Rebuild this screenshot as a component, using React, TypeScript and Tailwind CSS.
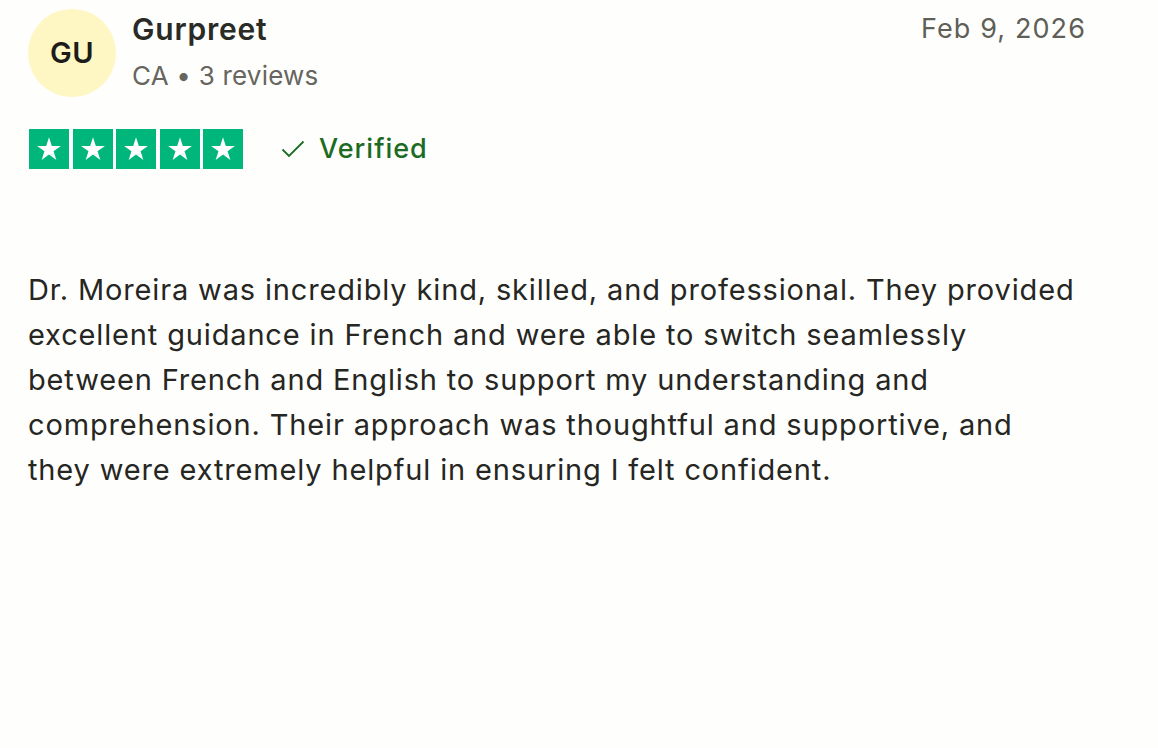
import React from "react";

function Star() {
  return (
    <div className="w-[40px] h-[40px] bg-[#00b67a] flex items-center justify-center">
      <svg width="30" height="30" viewBox="0 0 24 24">
        <path
          d="M12 2.6l2.25 6.93h7.28l-5.89 4.28 2.25 6.93L12 16.46l-5.89 4.28 2.25-6.93-5.89-4.28h7.28z"
          fill="#ffffff"
        />
        <path d="M15.2 15.4l0.7 2.2L12 16.46z" fill="#e6f5ee" />
      </svg>
    </div>
  );
}

export default function App() {
  const font = { fontFamily: "Inter, 'Noto Sans', sans-serif" };
  return (
    <div className="w-[1158px] h-[748px] bg-[#fefefd] text-[#2a2a26]" style={font}>
      <div className="pl-[28px] pr-[72px] pt-[9px]">
        <div className="flex items-start">
          <div className="w-[88px] h-[88px] rounded-full bg-[#fef6c3] flex items-center justify-center text-[29px] font-semibold text-[#1c1c1a] tracking-[0.5px] shrink-0">
            GU
          </div>
          <div className="ml-[16px] flex flex-col">
            <div className="text-[30px] font-semibold leading-[40px] text-[#2a2a26] tracking-[0.8px]">Gurpreet</div>
            <div className="text-[26px] leading-[36px] mt-[9px] text-[#66655e] tracking-[0.2px]">CA • 3 reviews</div>
          </div>
          <div className="ml-auto text-[27px] leading-[40px] text-[#5f5e57] tracking-[1.1px]">Feb 9, 2026</div>
        </div>
        <div className="flex items-center mt-[32px] h-[40px]">
          <div className="flex gap-[3.5px] ml-[1px]">
            <Star />
            <Star />
            <Star />
            <Star />
            <Star />
          </div>
          <svg className="ml-[38px]" width="24" height="24" viewBox="0 0 24 24">
            <path d="M1.5 12.5l6.5 6.5L22.5 4.5" fill="none" stroke="#1d6b23" strokeWidth="1.8" />
          </svg>
          <span className="ml-[14px] text-[27px] font-medium text-[#1d6b23] tracking-[1px]">Verified</span>
        </div>
        <div className="h-[98px]" />
      </div>
      <div className="pl-[28px]">
        <p className="text-[29px] leading-[45px] text-[#262622] tracking-[0.85px] whitespace-nowrap">
          Dr. Moreira was incredibly kind, skilled, and professional. They provided
          <br />
          excellent guidance in French and were able to switch seamlessly
          <br />
          between French and English to support my understanding and
          <br />
          comprehension. Their approach was thoughtful and supportive, and
          <br />
          they were extremely helpful in ensuring I felt confident.
        </p>
      </div>
    </div>
  );
}
